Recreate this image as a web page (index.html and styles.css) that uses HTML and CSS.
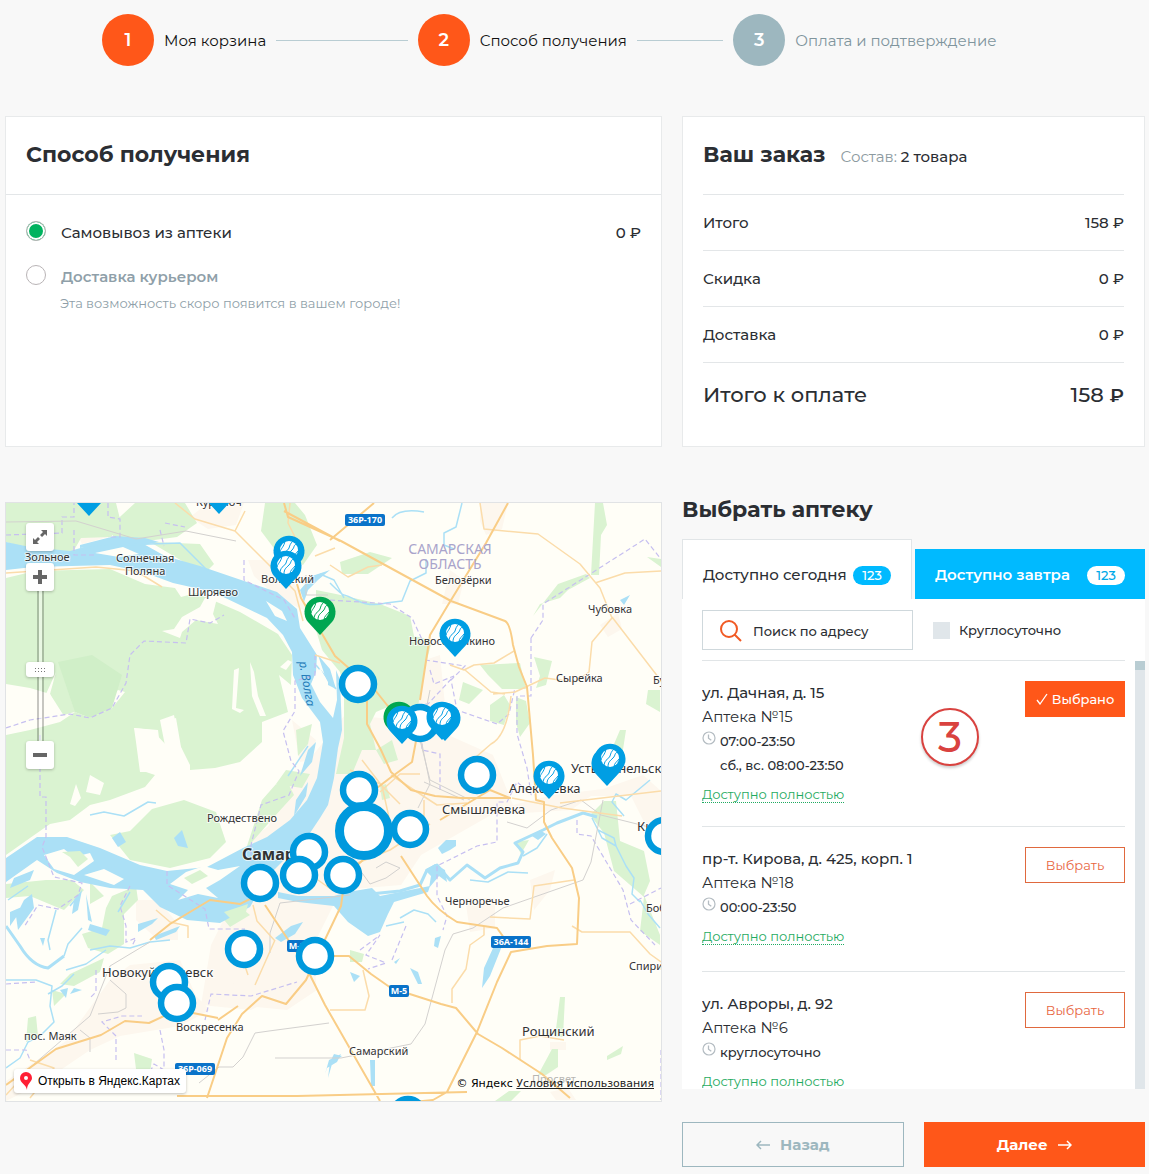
FILE: index.html
```html
<!DOCTYPE html>
<html lang="ru">
<head>
<meta charset="utf-8">
<meta name="viewport" content="width=device-width, initial-scale=1">
<title>Способ получения</title>
<link rel="stylesheet" href="styles.css">
</head>
<body>
<svg width="0" height="0" class="sprite" aria-hidden="true">
  <symbol id="clock" viewBox="0 0 14 14"><circle cx="7" cy="7" r="6" fill="none" stroke="#b4bcc2" stroke-width="1.2"/><path d="M6.5 3.5V7.2L9.3 9.3" fill="none" stroke="#b4bcc2" stroke-width="1.3"/></symbol>
</svg>
<ol class="steps">
  <li class="step"><span class="step-num">1</span><span class="step-name">Моя корзина</span><span class="step-line"></span></li>
  <li class="step"><span class="step-num">2</span><span class="step-name">Способ получения</span><span class="step-line"></span></li>
  <li class="step step-next"><span class="step-num">3</span><span class="step-name">Оплата и подтверждение</span></li>
</ol>

<main class="columns">
  <section class="card delivery">
    <h2 class="card-head title">Способ получения</h2>
    <div class="options">
      <label class="option"><input type="radio" name="delivery" checked><span class="option-name">Самовывоз из аптеки</span><span>0 ₽</span></label>
      <label class="option option-off"><input type="radio" name="delivery"><span class="option-name">Доставка курьером</span></label>
      <p class="option-note">Эта возможность скоро появится в вашем городе!</p>
    </div>
  </section>

  <section class="card order">
    <div class="order-head"><h2 class="title">Ваш заказ</h2><span class="order-items">Состав: <b>2 товара</b></span></div>
    <dl class="totals">
      <div><dt>Итого</dt><dd>158 ₽</dd></div>
      <div><dt>Скидка</dt><dd>0 ₽</dd></div>
      <div><dt>Доставка</dt><dd>0 ₽</dd></div>
      <div class="grand"><dt>Итого к оплате</dt><dd>158 <span class="rub">₽</span></dd></div>
    </dl>
  </section>

  <section class="map" aria-label="Карта аптек">
    <svg class="map-canvas" viewBox="6 503 655 598" preserveAspectRatio="xMidYMid slice">
      <defs>
        <g id="ball"><circle r="9" fill="#fff"/><path d="M-6 7C-5 1-1 1 0-2S1-6 4-9M-2 9C-2 4 0 3 3 0S4-5 8-6M-9 2C-8-2-5-3-4-9M4 9C4 5 7 4 9 1" fill="none" stroke="currentColor"/></g>
        <g id="pin"><path d="M0 23L-12 10A15.500 15.500 0 1 1 12 10Z" fill="currentColor"/><use href="#ball" y="-1"/></g>
        <circle id="ring" r="16" fill="#fff" stroke="#0099dd" stroke-width="6.500"/>
      </defs>
      <rect x="6" y="503" width="655" height="598" fill="#fffef7"/>

      <g fill="#fdf7ee">
        <path d="M208 503h36l-8 22-28 4-18-12zM70 520l28 4 14 12-30 8zM248 560l24 0 24 26 12 26-30-14-24-22zM480 503h28l-6 26-16 6-6-14zM450 570l14 10-6 24-16 0z"/>
        <path d="M345 715l60 5 20-60 15-5 8 80 45 20 20 50 40-10 50-6 40-14 18 16v50l-15-15-15-30-40 0-20 14-80 5-70 40-20 30-60 5-20 40-30 60-40 20-50-5 10-60 20-40 10-40 20-20 20-50 40-50z"/>
        <path d="M110 980l20-15 50-5 16 36 14 14-30 16-60 10-30 14-50 34-34 17v-20l60-40zM232 985l50-45 30 5 5 45-30 20-50-5zM136 900l22 0 20 24 0 16-20 0-22-20zM465 898h30v30l-25 4zM530 880l25-10-5 20-16 20zM600 625l18-12 4 16-14 8zM550 1042h16v8h-16zM550 1092l18-4 8 12h-20z"/>
        <path d="M292 720l24 20-6 20-10 2zM250 840l60-45 15-60 15 5-10 100-50 40z"/>
      </g>

      <g fill="#daf3d1">
        <path d="M6 578L35 571 110 569 145 584 175 588 181 597 196 593 240 612 278 634 292 655 291 685 279 675 288 712 262 722 262 742 240 762 215 768 190 770V765L181 747 176 718 163 722 168 747 152 730 134 728 142 745 140 770 155 775 145 787 110 800 90 805 70 820 50 824 30 838 6 855V735L30 730 60 722 75 712 90 718 112 708 125 692 118 690 100 705 60 716 50 694 30 688 6 684Z"/>
        <path d="M6 503h110l5 20-10 14-30 1-8 14-40-2-27-8zM135 503h50l12 20-20 14-60 8-8-18zM150 542l50 2 14 20-10 10zM265 503h30l10 12 12 30-14 20-24-10-18-24zM340 562l30-10 22 6-24 16-26 0z"/>
        <path d="M316 590l20 4 44 10 30 12 4 20 18 4-6 24-8 42-28 0-14 6-10 20-16-30-10-30-18-22-6-20z"/>
        <path d="M340 668l24 14 6 42 6 26-14 0-10 24-16 0 8-36 0-40zM376 750l16-10 6 20-14 4zM380 786l6-2 4 14-8 2zM595 503h8l4 22-6 10-2 40h-8zM533 616l25-32 28-10 4 4-22 12-8 8-20 6zM480 665l40-2 6 26-24 0-14-14zM490 705l14-10 6 10-6 20-14-4zM516 697l10 4 4 22-10 14-4-14zM534 657l18 4-6 24-10 3 4-12zM463 682l20 8-14 14-10-4zM620 730h6l-4 26-8-12zM648 690l12 0v22l-14-8zM647 557l14 2v8zM590 815l14-14 12 0 4 40 24 10 6 30-6 14 16 40v10l-20-14 4-34-30-26-10-38zM515 842l14-2-8 14z"/>
        <path d="M110 835l20-4 22-22 32-9 32 12 10 30-16 16-40 10-40-8zM262 800l22-25 10 20-20 22-28 32zM6 884l40-4 26 0 12 10-20 20-10-4-24-10-24 2zM112 896l24-10 2 14-14 14 0 30-16 10-20-6-6-14 20-6 4-20zM90 882l14 14-14 8zM70 974l34-16-4 14-26 14-14-2zM52 990l14 4-12 12zM28 1018l8-2 2 20-12 6zM220 915l20-8 10 8-20 12zM134 1053l18 6-2 14-14-4zM154 1078l22-6-8 18zM560 997l5 0-2 40-8 0zM552 1049l6 0 0 18-12 8-8 0zM607 1056l16-10-2 8-14 6zM495 1101l14-10 12 0-10 10zM350 950l14 4-2 8-12 0zM286 770l24 4-8 14-26-4zM296 730l16-6-4 20-10 12z"/>
      </g>
      <path d="M58 662L92 655 122 675 112 708 90 718 75 712z" fill="#d0efc8"/>
      <g fill="#fffef7">
        <path d="M205 598l12 0-4 16 5 10-22-4-14 12-2 6-18-7 12-2 8-12 18-10zM234 670l5-2-3 40 8 2-4 3-8-4zM250 662l4 10 4 24 8 20-6 0-8-20zM160 720l14-5 6 30 8 20-12 6-10-20zM134 728l24 2 2 16-10 0 8 26-18 0-4-30zM288 660l4 2-6 8-6-3zM90 775l14 8-4 12-14-3zM76 784l5 14-6 8-5-2zM56 672l-6 22 14 22-4 0-14-22z"/>
      </g>

      <g fill="#abe0f6">
        <path d="M6 542L30 547 70 551 105 541 140 542 165 556 200 566 247 582 277 592 297 609 300 628 317 655 316 672 311 684 320 702 333 718 337 700 336 670 340 680 342 730 338 748 334 778 328 805 320 818 310 833 287 857 267 877 250 907 220 923 187 920 160 907 143 890 110 888 80 882 57 873 37 860 6 882V858L37 837 67 837 100 848 140 865 167 871 207 867 243 848 267 837 290 820 307 800 317 778 323 742 320 722 302 698 293 675 292 652 283 635 267 618 240 605 213 592 173 583 143 572 110 565 33 567 6 570Z"/>
        <path d="M80 545l35-9 30 2 14 4-20 4-24-2-35 4zM300 590l12-14 18-6-12 10-10 10-4 12zM318 655l12 14 6 20-8-4zM308 750l8-8-4 20-12 14zM296 800l12-18-2 14-12 20z"/>
        <path d="M278 892l20 4 36 0 14-4 24-4 8 8 50-10-2 6-34 10-6 12-8 18-12 4-20-14-14-16-36-4-20-4zM425 870l10-6 10 6 2 12-8-6-10 12 2-12zM438 848l8-8 10 0 0 6-6 4-8 4zM532 836l8-6 6 4-8 6zM494 946h8l-12 30-8 12 2-20zM435 938l6-2-3 12-4-2zM410 968l8 4 4 12-4 0zM350 972l10 4-6 6zM394 962l6-4-4 6zM620 600l10-5-6 10zM275 938l16-12 12-4-8 12-14 8zM112 838l8-6 6 10-8 5zM174 838l8-8 6 18-10-2zM370 1060h5v26h-4zM325 1074l4-14 12-6-4 8-10 6zM330 1062l4-8 8 2-10 8-4 14z"/>
        <path d="M138 924l20-6-6 6-14 8zM154 936l26-10-4 6-20 8zM24 900l8-6 2 14-16 22-2-14zM10 912l14-6-14 20zM74 900l8-10-4 20-6 4zM86 894l6 28-4-2zM90 924l20 6-4 6-18-6zM30 880l-20 8 4-10 20-8zM98 872l20-6-6 14zM40 938l5 0-2 8zM60 990l8-2-2 10zM74 988l8 2-12 4z"/>
      </g>
      <g fill="none" stroke="#abe0f6" stroke-linejoin="round" stroke-width="3">
        <path d="M370 894L400 891 420 885 427 870 437 865 450 880 467 865 485 878 500 868 518 863 523 852 515 843 543 830 557 823 583 813 597 817M6 926l14 20q12 20 28 22l16-12"/>
      </g>
      <g fill="none" stroke="#abe0f6" stroke-linejoin="round" stroke-width="1.500">
        <path d="M470 880l18 2 20-10 20 1M523 856l14-8 10-14M592 818l10 20 14 8-2-8-16-8M616 846l10 20 8 12-2 16 8 8M640 900l8 14 12 14"/>
        <path d="M330 583q12 12 14 12t14 6 28 2l16-2 8-20 16-8 0-14M392 518q8-10 32-6M462 503l-6 24-12 6 0 12 10 4M320 574l14 6 10 18M650 780l-24 20-10-6-4 8 12 14"/>
        <path d="M90 815l14-3 20 4 24-14 8 1M64 956l4-12 14-16M6 980l30 0 16 6-2 20 4 16-14 14-12 6-8 16-14 10M90 950l20-4 20 2 20-6 20-2M66 970l20-6 20-14M48 994l14-8 12-12M56 910l-8 30 2 10M70 906l10-12M8 900l20-14M130 892l-12 20"/>
        <path d="M400 918l14-8 14 4 8 8M404 922l-18 4M120 545l60-2 30 30M90 548l-30 10M288 776l20-30M316 665l20 24"/>
      </g>
      <g fill="#fffef7">
        <path d="M266 601l16 10 5 10-12-5zM95 553l28-6 16 7-20 3zM320 668l8 14 0 22-14-20zM44 855l20-6 10 8 16-4 4 8-20 14-20-6zM170 884l16-12 18-6 14 4 22-4-20 14-14 8 12 10-20-4-20 6 10-10zM84 875l20-6 20 10-10 6z"/>
      </g>
      <g fill="#daf3d1"><path d="M184 878l16-8 8 6-16 8zM62 852l18-1 8 8-10 8-8-10zM224 912l24-8-2 8-14 8z"/></g>

      <g fill="none" stroke="#c6bff0" stroke-width="1.200" stroke-dasharray="5 3">
        <path d="M6 535l56-2 0-16 12 0 0-14M74 530v25l20 0M108 503l0 14 12 2 0 18-12 0M165 523l20 4M160 530l4 16M6 728l24-8 40-6 20 4 22-10 14-25 4-28 14-14 42 2 4-24 20 4 14-8M40 735v62h6v40l-4 10 12 30 28 6-4 12-20 14-20-4-14 22M244 560v20l40 20 12 20M315 655v20l-20 6 0 30-12 20 8 30 8 10-10 24-28 10-10 40 0 16"/>
        <path d="M330 600l60 4 22 14 14 30M425 660l40 6-14 14 6 30 40 14 12-10 6-26M430 670l4 14 20-8-26 28-6 0 0 46 18 4v36M531 638l12-18 0-16 102-65 16 20M531 638v58l-14 0v38l10 34 4 26-14-12-10 20-10 0 0 20 0 20-20 4-40 20 0 30 10 20-4 14"/>
        <path d="M577 820v14l14 2 32 54 8 30 24 25M630 904l31-16M406 926l-14 34M360 950l20-15-14 20 20 8-18 6M167 871l0 14 38 24 4 20 36 0M130 886l-10 20 6 20 0 16 10-4-4 8M6 984l30-2M96 970l0 22-6 6M160 1030l4 20v20l-10-6-6 12-8-4M116 1060v-24l-14-14 20-6 20 0M6 1050l20 0 4 10M661 1050v50M205 1020l6-26 40 2 46-14"/>
      </g>
      <g fill="none" stroke="#d3d1cf" stroke-width="1">
        <path d="M6 522l70-1 60 18 50-8 50 10M306 575v20h22M661 830l-60-15-20-15-30 10-24 18-20-6M603 800l-12 62-8 18-80 28-30 20-20 6-8 16-20 74-14 20-70 14-66 0M199 1083l20-16 14 0 10-10 12-24 14-2 60-8M20 1076l70-60 20-50 40-24M80 1030l10 8v14M110 980l16 14v14l-8 4-20 2M430 690l-10 50 10 40 40 20M420 734l10 50-12 24M424 782l40 18M350 895l-70 8-10 30 0 20M360 870l10 14 16-6 14-10-14-6-10 6"/>
      </g>
      <g fill="none" stroke="#fbdcaa" stroke-width="1.500" stroke-linejoin="round">
        <path d="M175 503l20 16 40 12 60 60 8 30M235 531l10-20M6 573l90-6 40 4 26 16M315 655l25 8M290 503l-2 20 10 20M315 556l20-8M330 565l18 12 20-10 14-2M480 503l4 26 54 5 42 30 20 24 12 30-20 24-3 30-14 10-30-4-30 14-22 2M595 583l30-10 36-2M612 617l50 65M450 665l14 5 10-5 20-2 20-12M465 670l26 22 14 2M511 696q-4 40-20 48l-30 26M350 770l30 14 20 20M391 775l46 30 30-2M362 760l20 26 12 54M380 792l20-18 20 0M424 800v18M512 798l50 10 60 8M560 803l101-12M340 870l50-20 40-26M345 850l20-14M348 870l-16 20-14-10M484 927l0 8-14 10-4 24-14 20 0 14M490 917l40 2 4-33 40-6M572 926l10 6 48 0 20 22 11 8M363 970l6 26-4 14-35 0M520 1060v-20l20-4 24 4M156 910l14 12 18 4 0 12M253 905l4 16 18 20M238 945l10 30M300 1100M30 1060l24 8-24 30M6 1095l20-22M255 985l20-45"/>
      </g>
      <g fill="none" stroke="#f9cd86" stroke-width="2" stroke-linejoin="round">
        <path d="M284 503l4 14 53 24 110 60 54 20q5 2 8 24l6 22 8 20 6 68 3 45 8 2v20l8 16 20 30 7 30-2 46-30 2-36 6-14 30-20 50-30 60-14 8-20 2-22 20-40 0-29 8-90 0M330 540l44-37M508 503l-22 40-38 62-18 30-10 65M340 541l-56-30M297 584l4 14 20 34 14 24 16 14M367 690v34l14 26 10 22 20 18 24 6 26 2 50 0M420 720l-8 42-22 16-34 26-20 20M375 690l24 30M440 820l50-30 20 8M401 856l26 40q10 14 30 26l40 6 10 14M363 860l-18 16-4 30-21 44-14 30-20 24-24-8-20 18-15 24-20 60M265 905l40 60 20 40 55 96M315 956l34 0 22 18 20 14 50 16 15 4 22 26 24 14 40 26 28 24M6 1085l50-36 45-14 24-14 24 2 30-14M178 1010l40 8M218 1020l20-14M177 1096h120l170-4M150 940l20-16 40-24 30 4 20-10"/>
      </g>

      <g class="place">
        <text x="196" y="506">Курумоч</text>
        <text x="25" y="561">Зольное</text><text x="116" y="562">Солнечная</text><text x="125" y="575">Поляна</text>
        <text x="188" y="596">Ширяево</text><text x="261" y="583">Волжский</text>
        <text x="435" y="584">Белозёрки</text><text x="588" y="613">Чубовка</text><text x="409" y="645">Новосемейкино</text>
        <text x="556" y="682">Сырейка</text><text x="653" y="684">Бузаевка</text><text x="207" y="822">Рождествено</text>
        <text x="445" y="905">Черноречье</text><text x="646" y="912">Бобровка</text><text x="629" y="970">Спиридоновка</text>
        <text x="176" y="1031">Воскресенка</text><text x="24" y="1040">пос. Маяк</text><text x="349" y="1055">Самарский</text>
        <text x="532" y="1083" opacity=".35">Просвет</text>
      </g>
      <g class="town">
        <text x="571" y="773">Усть-Кинельский</text><text x="509" y="793">Алексеевка</text><text x="442" y="814">Смышляевка</text>
        <text x="637" y="831">Кинель</text><text x="102" y="977">Новокуйбышевск</text><text x="522" y="1036">Рощинский</text>
      </g>
      <text class="city" x="242" y="860">Самара</text>
      <text class="region" x="450" y="554">САМАРСКАЯ</text><text class="region" x="450" y="569">ОБЛАСТЬ</text>
      <text class="river" transform="translate(299 662) rotate(80)">р. Волга</text>
      <g fill="#0a73c9"><rect x="345" y="514" width="40" height="12" rx="2"/><rect x="491" y="936" width="40" height="12" rx="2"/><rect x="389" y="985" width="20" height="12" rx="2"/><rect x="287" y="940" width="20" height="12" rx="2"/><rect x="175" y="1063" width="40" height="12" rx="2"/></g>
      <g class="road"><text x="365" y="523">36Р-170</text><text x="511" y="945">36А-144</text><text x="399" y="994">М-5</text><text x="297" y="949">М-5</text><text x="195" y="1072">36Р-069</text></g>

      <g color="#009ee3">
        <use href="#pin" x="89" y="493"/><use href="#pin" x="219" y="491"/>
        <use href="#pin" x="289" y="551"/><use href="#pin" x="286" y="566"/>
        <use href="#pin" x="320" y="612" color="#00a651"/><use href="#pin" x="455" y="634"/>
        <use href="#pin" x="399" y="717" color="#00a651"/>
        <use href="#ring" x="420" y="723"/><use href="#pin" x="402" y="721"/>
        <use href="#pin" x="445" y="718"/><use href="#pin" x="442" y="717"/>
        <use href="#pin" x="549" y="776"/><use href="#pin" x="607" y="763"/><use href="#pin" x="610" y="759"/>
      </g>
      <use href="#ring" x="358" y="684"/><use href="#ring" x="477" y="775"/><use href="#ring" x="359" y="790"/>
      <use href="#ring" x="410" y="829"/><use href="#ring" x="309" y="852"/><use href="#ring" x="299" y="875"/>
      <use href="#ring" x="343" y="875"/><use href="#ring" x="260" y="883"/><use href="#ring" x="244" y="949"/>
      <use href="#ring" x="315" y="956"/><use href="#ring" x="169" y="982"/><use href="#ring" x="177" y="1003"/>
      <use href="#ring" x="664" y="836"/><use href="#ring" x="408" y="1115"/>
      <circle cx="364" cy="831" r="24.500" fill="#fff" stroke="#0099dd" stroke-width="9"/>
    </svg>
    <div class="map-tools">
      <button class="tool tool-full" aria-label="На весь экран"><svg width="16" height="16" viewBox="0 0 16 16"><path d="M9 1h6v6l-2-2-3 3-2-2 3-3zM7 15H1V9l2 2 3-3 2 2-3 3z" fill="#666"/></svg></button>
      <button class="tool" aria-label="Приблизить"><svg width="14" height="14" viewBox="0 0 14 14"><path d="M5 0h4v5h5v4H9v5H5V9H0V5h5z" fill="#666"/></svg></button>
      <input class="zoom" type="range" min="0" max="19" value="9" aria-label="Масштаб">
      <button class="tool" aria-label="Отдалить"><svg width="14" height="14" viewBox="0 0 14 14"><path d="M0 5h14v4H0z" fill="#666"/></svg></button>
    </div>
    <a class="map-open" href="#"><svg width="12" height="18" viewBox="0 0 12 18"><path fill-rule="evenodd" d="M6 0a6 6 0 0 1 6 6c0 4-5 5-5 12C6 12 0 11 0 6a6 6 0 0 1 6-6zM6 4a2 2 0 1 0 0 4 2 2 0 0 0 0-4z" fill="#ff1f35"/></svg>Открыть в Яндекс.Картах</a>
    <p class="map-copy">© Яндекс <a href="#">Условия использования</a></p>
  </section>

  <section class="picker">
    <h2 class="title picker-title">Выбрать аптеку</h2>
    <div class="tabs" role="tablist">
      <button class="tab tab-on" role="tab" aria-selected="true">Доступно сегодня<span class="count">123</span></button>
      <button class="tab" role="tab" aria-selected="false">Доступно завтра<span class="count">123</span></button>
    </div>
    <div class="panel">
      <div class="filters">
        <label class="search"><svg width="22" height="22" viewBox="0 0 22 22"><path d="M14.500 14.500L21 21M17 9A8 8 0 1 1 1 9a8 8 0 0 1 16 0z" fill="none" stroke="#f15a24" stroke-width="2"/></svg><input type="text" placeholder="Поиск по адресу" aria-label="Поиск по адресу"></label>
        <label class="allday"><input type="checkbox">Круглосуточно</label>
      </div>
      <div class="scroller">
        <ul class="list">
          <li class="shop">
            <div>
              <h3>ул. Дачная, д. 15</h3><p class="shop-name">Аптека №15</p>
              <p class="hours"><svg width="14" height="14"><use href="#clock"/></svg>07:00-23:50</p><p class="hours hours-more">сб., вс. 08:00-23:50</p>
              <p class="stock"><a href="#">Доступно полностью</a></p>
            </div>
            <button class="pick pick-on"><svg width="12" height="12" viewBox="0 0 12 12"><path d="M1 7l3 4L11 1" fill="none" stroke="#fff" stroke-width="1.300"/></svg>Выбрано</button>
            <span class="marker">3</span>
          </li>
          <li class="shop">
            <div>
              <h3>пр-т. Кирова, д. 425, корп. 1</h3><p class="shop-name">Аптека №18</p>
              <p class="hours"><svg width="14" height="14"><use href="#clock"/></svg>00:00-23:50</p>
              <p class="stock"><a href="#">Доступно полностью</a></p>
            </div>
            <button class="pick">Выбрать</button>
          </li>
          <li class="shop">
            <div>
              <h3>ул. Авроры, д. 92</h3><p class="shop-name">Аптека №6</p>
              <p class="hours"><svg width="14" height="14"><use href="#clock"/></svg>круглосуточно</p>
              <p class="stock"><a href="#">Доступно полностью</a></p>
            </div>
            <button class="pick">Выбрать</button>
          </li>
        </ul>
        <div class="bar"><div class="bar-thumb"></div></div>
      </div>
    </div>
    <div class="actions">
      <button class="action action-back"><svg width="14" height="10" viewBox="0 0 14 10"><path d="M14 5H1M5 1L1 5l4 4" fill="none" stroke="currentColor" stroke-width="1.500"/></svg>Назад</button>
      <button class="action action-go">Далее<svg width="14" height="10" viewBox="0 0 14 10"><path d="M0 5h13M9 1l4 4-4 4" fill="none" stroke="currentColor" stroke-width="1.500"/></svg></button>
    </div>
  </section>
</main>
</body>
</html>
```
FILE: styles.css
```css
* { box-sizing: border-box; margin: 0; padding: 0; }
body {
  background: #f8f8f8;
  color: #2b2e33;
  font: 500 15px/24px Montserrat, Inter, sans-serif;
  padding: 14px 4px 7px 5px;
}
button, input { font: inherit; color: inherit; }
button { cursor: pointer; border: 0; }
ul, ol { list-style: none; }
.sprite { position: absolute; }
.title { font-size: 22px; line-height: 28px; font-weight: 700; }

.steps { display: grid; grid-template-columns: repeat(3, 1fr); padding: 0 96px 0 97px; margin-bottom: 50px; color: #111; font-weight: 400; }
.step { display: flex; align-items: center; gap: 10px; padding-right: 10px; white-space: nowrap; }
.step-num { flex: none; width: 52px; height: 52px; border-radius: 50%; background: #ff5719; color: #fff; font-size: 18px; line-height: 52px; font-weight: 600; text-align: center; }
.step-name { padding-top: 2px; }
.step-line { flex: 1; height: 1px; background: #b9cdd3; }
.step-next { color: #80959d; }
.step-next .step-num { background: #9db7bf; }

.columns { display: grid; grid-template-columns: 657fr 463fr; column-gap: 20px; }
.card { background: #fff; border: 1px solid #e8eaeb; min-height: 331px; margin-bottom: 55px; }
.card-head { padding: 24px 20px 25px; border-bottom: 1px solid #e3e6e8; }
.options { padding: 26px 20px; }
.option { display: flex; align-items: flex-start; gap: 15px; margin-bottom: 20px; }
.option-name { flex: 1; }
.option input { appearance: none; width: 20px; height: 20px; border: 1px solid #b9b4b6; border-radius: 50%; background: #fff; }
.option input:checked { background: #00b35f; box-shadow: inset 0 0 0 2px #fff; }
.option-off { color: #8f9fa9; font-weight: 600; margin-bottom: 0; }
.option-note { color: #8f9fa9; font-size: 13px; font-weight: 400; padding: 2px 0 0 34px; }

.order { padding: 0 20px; }
.order-head { display: flex; align-items: baseline; gap: 15px; padding: 24px 0 25px; border-bottom: 1px solid #e3e6e8; }
.order-items { color: #8c9aa0; font-weight: 400; line-height: 20px; }
.order-items b { color: #2b2e33; font-weight: 500; }
.totals div { display: flex; justify-content: space-between; padding: 16px 0 15px; border-bottom: 1px solid #e3e6e8; }
.totals .grand { border: 0; padding-top: 20px; font-size: 21px; }
.rub { font-size: 19px; font-weight: 600; }

.map { position: relative; height: 600px; border: 1px solid #e1e3e5; overflow: hidden; font-weight: 400; }
.map-canvas { display: block; width: 100%; height: 100%; font-family: "Noto Sans", sans-serif; }
.place, .town, .city { fill: #333; stroke: #fff; stroke-width: 2px; stroke-opacity: .7; paint-order: stroke; }
.place { font-size: 11px; }
.town { font-size: 13px; }
.city { font-size: 16px; font-weight: 700; }
.region { font-size: 14px; fill: #a9a4cb; text-anchor: middle; }
.river { font-size: 12px; font-style: italic; fill: #1f7bb8; }
.road { font-size: 9px; font-weight: 700; fill: #fff; text-anchor: middle; }
.map-tools { position: absolute; left: 20px; top: 20px; display: flex; flex-direction: column; width: 28px; }
.tool { display: flex; align-items: center; justify-content: center; height: 28px; background: #fff; border-radius: 3px; box-shadow: 0 1px 3px rgba(0,0,0,.25); }
.tool-full { margin-bottom: 12px; }
.zoom { appearance: none; writing-mode: vertical-lr; direction: rtl; width: 28px; height: 150px; background: linear-gradient(90deg, transparent 11px, rgba(0,0,0,.22) 11px 13px, rgba(255,255,255,.4) 13px 16px, rgba(0,0,0,.22) 16px 18px, transparent 18px); }
.zoom::-webkit-slider-thumb {
  appearance: none; width: 28px; height: 15px; border-radius: 3px; box-shadow: 0 1px 3px rgba(0,0,0,.25);
  background:
    repeating-linear-gradient(90deg, #777 0 1px, transparent 1px 3px) 9px 6px / 10px 1px no-repeat,
    repeating-linear-gradient(90deg, #777 0 1px, transparent 1px 3px) 9px 9px / 10px 1px no-repeat,
    #fff;
}
.map-open { position: absolute; left: 8px; bottom: 8px; display: flex; align-items: center; gap: 6px; padding: 0 6px; background: #fff; border-radius: 3px; box-shadow: 0 1px 3px rgba(0,0,0,.25); color: #000; font: 12px/24px "Liberation Sans", Arial, sans-serif; text-decoration: none; }
.map-copy { position: absolute; right: 7px; bottom: 9px; font: 11px/16px "DejaVu Sans", Verdana, sans-serif; color: #000; }
.map-copy a { color: #222; }

.picker-title { margin-top: -6px; margin-bottom: 15px; }
.tabs { display: grid; grid-template-columns: 1fr 1fr; align-items: end; gap: 3px; }
.tab { display: flex; align-items: center; justify-content: space-between; height: 50px; padding: 2px 20px 0; background: #00baff; color: #fff; font-weight: 600; white-space: nowrap; }
.tab-on { height: 60px; padding-top: 11px; background: #fff; border: 1px solid #e1e5e7; border-bottom: 0; color: #2b2e33; font-weight: 500; }
.count { padding: 0 9px; border-radius: 10px; background: #fff; color: #00a9e8; font-size: 13px; line-height: 19px; font-weight: 500; }
.tab-on .count { background: #00baff; color: #fff; }
.panel { background: #fff; padding-left: 20px; }
.filters { display: flex; align-items: center; gap: 20px; margin-right: 20px; padding: 11px 0 10px; border-bottom: 1px solid #e1e5e7; font-size: 13px; }
.search { display: flex; flex: 0 1 211px; align-items: center; gap: 11px; height: 40px; padding: 2px 17px 0; border: 1px solid #cfd8dc; }
.search svg { flex: none; }
.search input { width: 100%; border: 0; background: none; outline: 0; }
.search input::placeholder { color: #2b2e33; opacity: 1; }
.allday { display: flex; align-items: center; gap: 9px; }
.allday input { appearance: none; width: 17px; height: 17px; background: #e0e6ea; }
.scroller { display: flex; height: 428px; overflow: hidden; }
.list { flex: 1; margin-right: 10px; }
.shop { position: relative; display: flex; justify-content: space-between; align-items: flex-start; min-height: 145px; padding: 20px 0; border-bottom: 1px solid #e1e5e7; }
.shop h3 { font-size: 15px; font-weight: 500; }
.shop-name { font-weight: 400; }
.hours { display: flex; align-items: flex-start; gap: 4px; font-size: 13px; }
.hours svg { margin-top: 2px; }
.hours-more { padding-left: 18px; }
.stock { margin-top: 5px; font-size: 13px; font-weight: 400; }
.stock a { color: #1fab61; text-decoration: none; border-bottom: 1px dotted; }
.pick { display: flex; align-items: center; justify-content: center; gap: 4px; width: 100px; height: 36px; border: 1px solid #e0693e; background: #fff; color: #e8663f; font-size: 13px; font-weight: 400; }
.pick-on { background: #ff5719; border-color: #ff5719; color: #fff; font-weight: 500; }
.marker { position: absolute; right: 146px; top: 47px; width: 58px; height: 58px; border: 2px solid #d9423f; border-radius: 50%; box-shadow: 0 2px 3px rgba(0,0,0,.2); background: #fff; color: #d9423f; font-size: 42px; line-height: 54px; text-align: center; }
.bar { width: 10px; background: #e0e6ea; }
.bar-thumb { height: 9px; background: #b9cdd3; }
.actions { display: grid; grid-template-columns: 1fr 1fr; gap: 20px; margin-top: 33px; }
.action { display: flex; align-items: center; justify-content: center; gap: 10px; height: 45px; font-weight: 700; }
.action-back { background: none; border: 1px solid #9db7bf; color: #9db7bf; }
.action-go { background: #ff5719; color: #fff; }
```
